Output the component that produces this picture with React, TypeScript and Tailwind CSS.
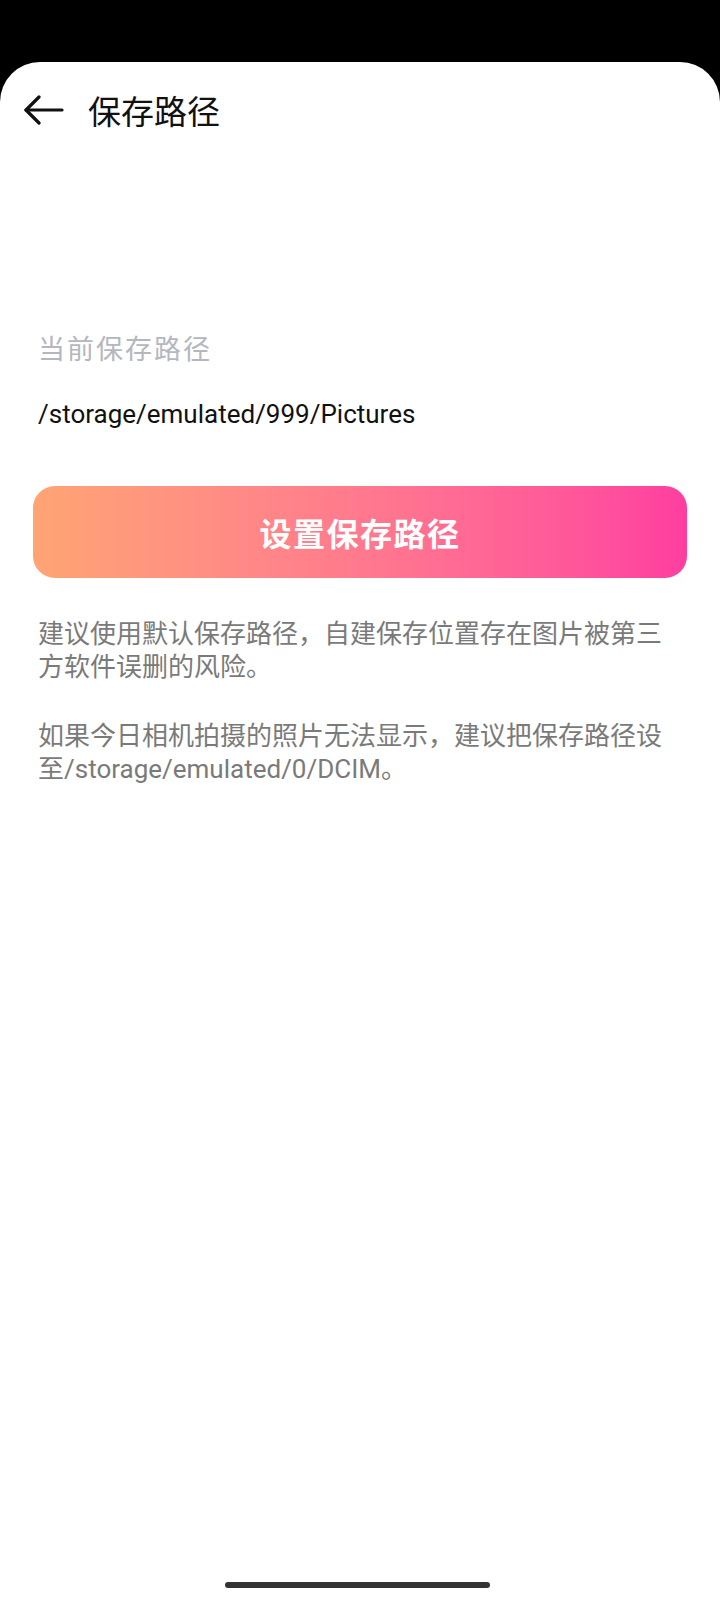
import React from "react";

export default function App() {
  const font = { fontFamily: "Roboto, 'Noto Sans CJK SC', sans-serif" };
  return (
    <div className="w-[720px] h-[1600px] bg-black flex flex-col" style={font}>
      <div className="mt-[62px] flex-1 bg-white rounded-t-[40px] flex flex-col">
        <div className="h-[96px] flex items-center pl-[24px]">
          <svg width="40" height="30" viewBox="0 0 40 30" fill="none" stroke="#111" strokeWidth="3.2" strokeLinecap="round" strokeLinejoin="round">
            <path d="M2 15 H38" />
            <path d="M15 2 L2 15 L15 28" />
          </svg>
          <div className="ml-[24px] text-[33px] leading-[40px] text-[#111]" style={{ fontFamily: "'Noto Sans CJK SC', sans-serif" }}>保存路径</div>
        </div>
        <div className="mt-[172px] px-[38px] text-[27px] leading-[36px] tracking-[2px] text-[#b4b7be]" style={{ fontFamily: "'Noto Sans CJK SC', sans-serif" }}>当前保存路径</div>
        <div className="mt-[32px] px-[38px] text-[26px] leading-[32px] text-[#111]">/storage/emulated/999/Pictures</div>
        <button className="mt-[56px] mx-[33px] h-[92px] rounded-[22px] bg-gradient-to-r from-[#ffa474] to-[#ff3ea0] flex items-center justify-center text-white text-[32px] font-bold tracking-[1.5px]" style={{ fontFamily: "'Noto Sans CJK SC', sans-serif" }}>设置保存路径</button>
        <p className="mt-[40px] pl-[38px] pr-[38px] text-[26px] leading-[33px] text-[#7a7a7a]">建议使用默认保存路径，自建保存位置存在图片被第三方软件误删的风险。</p>
        <p className="mt-[36px] pl-[38px] pr-[38px] text-[26px] leading-[33px] text-[#7a7a7a]">如果今日相机拍摄的照片无法显示，建议把保存路径设至/storage/emulated/0/DCIM。</p>
        <div className="flex-1" />
        <div className="flex justify-center pb-[12px] pr-[5px]">
          <div className="w-[265px] h-[6px] rounded-full bg-[#333]" />
        </div>
      </div>
    </div>
  );
}
